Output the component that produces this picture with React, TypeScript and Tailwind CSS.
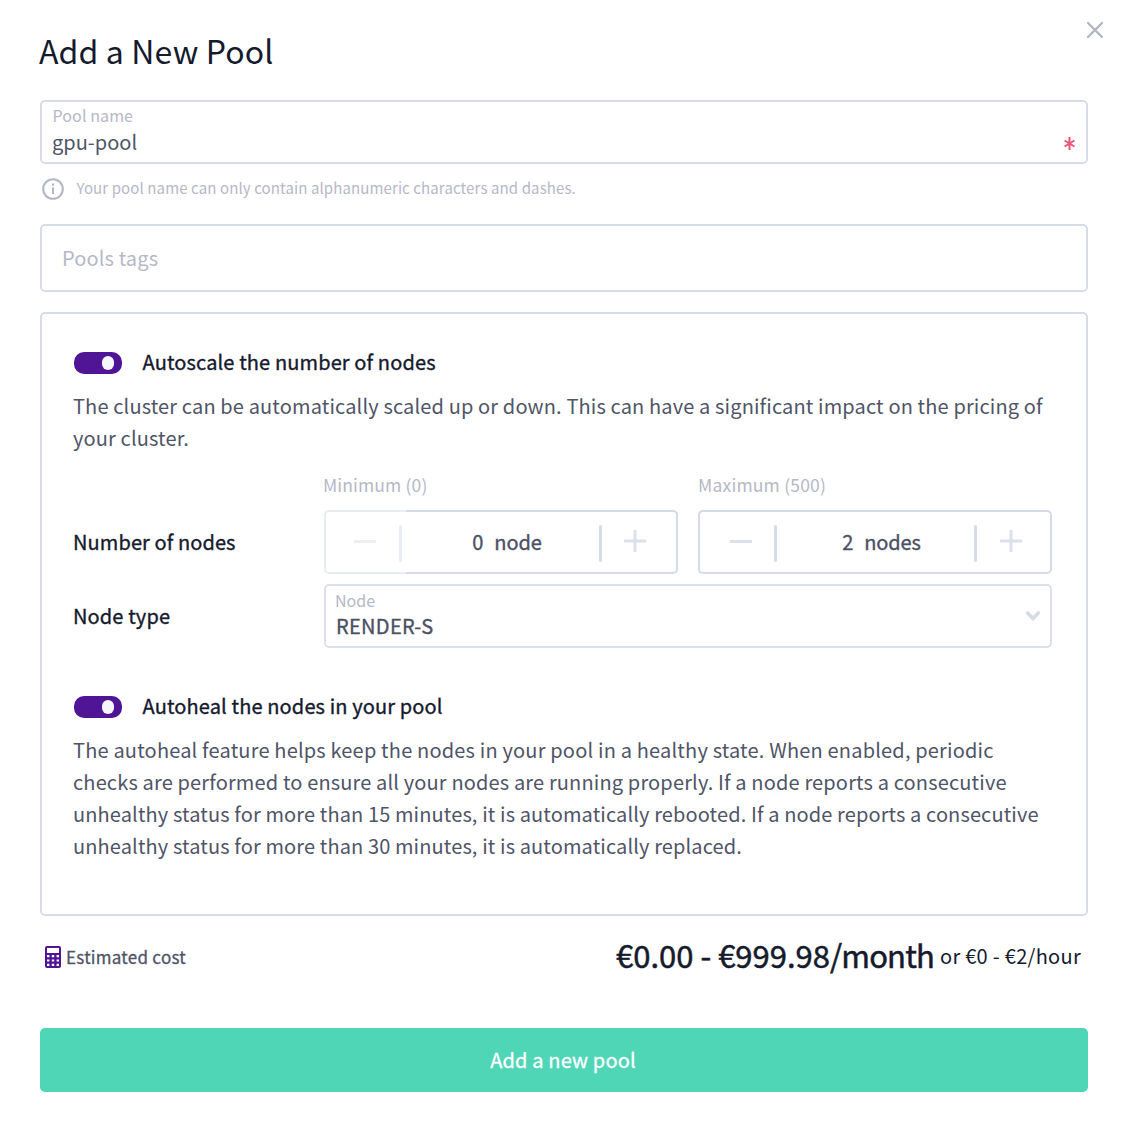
import type { ReactNode } from "react";

const medium = "[-webkit-text-stroke:0.35px_currentColor]";

function Toggle() {
  return (
    <button
      type="button"
      role="switch"
      aria-checked="true"
      className="flex h-[22px] w-12 shrink-0 items-center justify-end rounded-[10px] bg-[#4f1596] pr-2"
    >
      <span className="h-[14px] w-3 rounded-full bg-[#f6f5fa]" />
    </button>
  );
}

function ToggleRow({ children }: { children: ReactNode }) {
  return (
    <div className="flex h-8 items-center gap-[20.5px] pl-px">
      <Toggle />
      <span className={`pb-[2px] text-[20px] leading-8 tracking-[0.13px] text-[#151a2d] ${medium}`}>{children}</span>
    </div>
  );
}

function Minus() {
  return <span className="block h-[3px] w-[22px] bg-[#dbe0eb]" />;
}

function Plus() {
  return (
    <svg width="22" height="22" viewBox="0 0 22 22" fill="none" stroke="#dbe0eb" strokeWidth="3">
      <path d="M0 11h22M11 0v22" />
    </svg>
  );
}

function Stepper({ label, value, unit, disabled }: { label: string; value: number; unit: string; disabled?: boolean }) {
  return (
    <div className="w-[354px]">
      <div
        className={
          disabled
            ? "-ml-px h-[38px] pt-px text-[17.5px] leading-6 tracking-[0.13px] text-[#b5b8c7]"
            : "h-[38px] pt-px text-[17.5px] leading-6 tracking-[0.2px] text-[#b5b8c7]"
        }
      >
        {label}
      </div>
      <div className="flex h-16">
        <div
          className={
            disabled
              ? "flex w-[82px] items-center justify-between rounded-l-[5px] border-2 border-r-0 border-[#e9edf3] pb-px pl-7"
              : "flex w-[82px] items-center justify-between rounded-l-[5px] border-2 border-r-0 border-[#d5d9e8] pb-px pl-[30px]"
          }
        >
          <span className={disabled ? "pb-px opacity-50" : "pb-px"}>
            <Minus />
          </span>
          <span
            className={
              disabled
                ? "mt-[3px] mr-1 h-[37px] w-[3px] rounded-full bg-[#ebedf4]"
                : "mt-[3px] mr-[3px] h-[37px] w-[3px] rounded-full bg-[#d5dbe8]"
            }
          />
        </div>
        <div className="flex flex-1 items-center rounded-r-[5px] border-2 border-l-0 border-[#d5d9e8]">
          <div
            className={`flex flex-1 justify-center gap-[11px] pl-[9px] text-[20px] leading-8 tracking-[-0.1px] text-[#4b5064] ${medium}`}
          >
            <span>{value}</span>
            <span>{unit}</span>
          </div>
          <span className="mt-[2px] h-[37px] w-[3px] rounded-full bg-[#d5dbe8]" />
          <span className={disabled ? "pr-[30px] pb-[3px] pl-[22px]" : "pr-[28px] pb-[3px] pl-[23px]"}>
            <Plus />
          </span>
        </div>
      </div>
    </div>
  );
}

export default function App() {
  return (
    <main className="relative h-[1122px] w-[1124px] bg-white pt-[30px] pr-9 pl-10 font-['Noto_Sans_CJK_SC','Noto_Sans',sans-serif] text-[20px] leading-8 text-[#4f5467]">
      <button type="button" aria-label="Close" className="absolute top-[22px] left-[1087px]">
        <svg width="16" height="16" viewBox="0 0 16 16" fill="none" stroke="#b2b6c3" strokeWidth="2.3" strokeLinecap="round">
          <path d="M1 1l14 14M15 1L1 15" />
        </svg>
      </button>

      <h1 className="-ml-px h-[70px] text-[32px] leading-10 tracking-[0.14px] text-[#151a2d]">Add a New Pool</h1>

      <div className="flex h-16 justify-between rounded-[5px] border-2 border-[#d5dbe8] pr-[11px] pl-[10px]">
        <div>
          <div className="ml-[0.5px] h-6 pt-px text-[16px] leading-6 tracking-[0.1px] text-[#b5b8c7]">Pool name</div>
          <div className="leading-8">gpu-pool</div>
        </div>
        <svg className="mt-[35px]" width="11" height="13" viewBox="0 0 11 13" fill="none" stroke="#f0547a" strokeWidth="2">
          <path d="M5.5 0v13M0.6 3.5l9.8 6M10.4 3.5l-9.8 6" />
        </svg>
      </div>

      <div className="flex h-[60px] items-start gap-[12.5px] pt-[14px] pl-[2px] text-[#b5b8c7]">
        <svg width="22" height="22" viewBox="0 0 22 22" fill="none" stroke="#b2b6c3" strokeWidth="2">
          <circle cx="11" cy="11" r="9.8" />
          <path d="M11 9.5v6.5M11 5.5v2.2" />
        </svg>
        <span className="-mt-[2px] text-[15px] leading-6 tracking-[0.11px]">
          Your pool name can only contain alphanumeric characters and dashes.
        </span>
      </div>

      <div className="flex h-[68px] items-center rounded-[5px] border-2 border-[#d5dbe8] pl-5 tracking-[0.13px] text-[#b5b8c7]">
        Pools tags
      </div>

      <section className="mt-5 h-[604px] rounded-[5px] border-2 border-[#d5dbe8] pt-[33px] pr-[34px] pl-[31px]">
        <ToggleRow>Autoscale the number of nodes</ToggleRow>
        <p className="mt-[11px] tracking-[0.14px]">
          The cluster can be automatically scaled up or down. This can have a significant impact on the pricing of
          <br />
          your cluster.
        </p>
        <div className="mt-[18px] flex">
          <div className={`w-[251px] shrink-0 pt-[54px] tracking-[0.1px] text-[#151a2d] ${medium}`}>Number of nodes</div>
          <div className="flex gap-5">
            <Stepper label="Minimum (0)" value={0} unit="node" disabled />
            <Stepper label="Maximum (500)" value={2} unit="nodes" />
          </div>
        </div>
        <div className="mt-[10px] flex">
          <div className={`w-[251px] shrink-0 pt-4 tracking-[0.13px] text-[#151a2d] ${medium}`}>Node type</div>
          <div className="flex h-16 w-[728px] items-center justify-between rounded-[5px] border-2 border-[#dbe0ec] px-[9px]">
            <div className="h-full">
              <div className="h-6 pt-[2px] text-[16px] leading-6 text-[#b5b8c7]">Node</div>
              <div className={`ml-px leading-8 tracking-[0.3px] text-[#4b5064] ${medium}`}>RENDER-S</div>
            </div>
            <svg width="16" height="12" viewBox="0 0 16 12" fill="none" stroke="#d5dbe8" strokeWidth="3.6" strokeLinecap="round">
              <path d="M2.7 3L8 8.6 13.3 3" />
            </svg>
          </div>
        </div>
        <div className="mt-[43px]">
          <ToggleRow>Autoheal the nodes in your pool</ToggleRow>
        </div>
        <p className="mt-[11px] tracking-[0.12px]">
          <span className="tracking-[0.18px]">
            The autoheal feature helps keep the nodes in your pool in a healthy state. When enabled, periodic
          </span>
          <br />
          <span className="tracking-[0.15px]">
            checks are performed to ensure all your nodes are running properly. If a node reports a consecutive
          </span>
          <br />
          unhealthy status for more than 15 minutes, it is automatically rebooted. If a node reports a consecutive
          <br />
          unhealthy status for more than 30 minutes, it is automatically replaced.
        </p>
      </section>

      <div className="flex h-28 items-start justify-between pt-[18px] pr-[7px] pl-[5px]">
        <div className="flex items-center gap-[5px] pt-[7px]">
          <svg width="16" height="22" viewBox="0 0 16 22">
            <rect width="16" height="22" rx="2" fill="#4f1596" />
            <path
              fill="#fff"
              d="M2 2h12v5H2zM2 9h2.4v2.2H2zM6.8 9h2.4v2.2H6.8zM11.6 9H14v2.2h-2.4zM2 13.4h2.4v2.2H2zM6.8 13.4h2.4v2.2H6.8zM11.6 13.4H14v2.2h-2.4zM2 17.8h2.4V20H2zM6.8 17.8h2.4V20H6.8zM11.6 17.8H14V20h-2.4z"
            />
          </svg>
          <span className="text-[17px] leading-8 tracking-[0.27px] [-webkit-text-stroke:0.3px_currentColor]">
            Estimated cost
          </span>
        </div>
        <div className="flex items-baseline gap-[6px] pt-px text-[#151a2d]">
          <span className="text-[31px] leading-10 [-webkit-text-stroke:0.5px_currentColor]">
            €0.00 - €999.98<span className="tracking-[-0.85px]">/month</span>
          </span>
          <span className="relative -top-1 tracking-[0.29px]">or €0 - €2/hour</span>
        </div>
      </div>

      <button
        type="button"
        className="block h-16 w-full rounded-[5px] bg-[#4fd6b7] pr-[2px] tracking-[0.15px] text-white [-webkit-text-stroke:0.3px_currentColor]"
      >
        Add a new pool
      </button>
    </main>
  );
}
